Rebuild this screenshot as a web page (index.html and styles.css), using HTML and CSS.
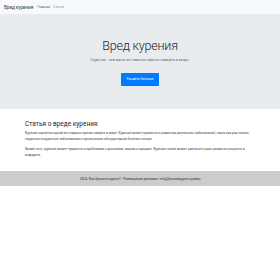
FILE: index.html
```html
<!DOCTYPE html>
<html lang="ru">
<head>
<meta charset="utf-8">
<title>Вред курения</title>
<link rel="stylesheet" href="styles.css">
</head>
<body>
<nav class="navbar">
  <a class="brand" href="#">Вред курения</a>
  <a class="nav-link active" href="#">Главная</a>
  <a class="nav-link" href="#">Статьи</a>
</nav>
<header class="jumbotron">
  <h1 class="title">Вред курения</h1>
  <p class="lead">Курение - это одна из главных причин смерти в мире.</p>
  <a class="btn" href="#">Узнайте больше</a>
</header>
<main class="article">
  <h2 class="article-title">Статья о вреде курения</h2>
  <p class="text">Курение является одной из главных причин смерти в мире. Курение может привести к развитию различных заболеваний, таких как рак легких, сердечно-сосудистые заболевания и хроническая обструктивная болезнь легких.</p>
  <p class="text">Кроме того, курение может привести к проблемам с дыханием, кашлю и одышке. Курение также может увеличить риск развития инсульта и инфаркта.</p>
</main>
<footer class="footer">2024. Как бросить курить? - Размещение рекламы: info@бросайкурить.домен</footer>
</body>
</html>
```

FILE: styles.css
```css
html, body {
  margin: 0;
  padding: 0;
  background: #fff;
  font-family: Roboto, "Liberation Sans", sans-serif;
  color: #212529;
}

.navbar {
  height: 14px;
  background: #f8f9fa;
  display: flex;
  align-items: center;
  padding: 0 4px;
  gap: 3px;
}

.brand {
  font-size: 4.6px;
  color: #343a40;
  text-decoration: none;
  margin-right: 1px;
}

.nav-link {
  font-size: 3.4px;
  color: rgba(0, 0, 0, 0.5);
  text-decoration: none;
}

.nav-link.active {
  color: rgba(0, 0, 0, 0.7);
}

.jumbotron {
  height: 95px;
  box-sizing: border-box;
  background: #e9ecef;
  padding-top: 24px;
  text-align: center;
}

.title {
  margin: 0;
  font-size: 12.5px;
  line-height: 16px;
  font-weight: 300;
  letter-spacing: -0.2px;
}

.lead {
  margin: 3px 0 0;
  font-size: 4px;
  line-height: 6px;
  font-weight: 300;
}

.btn {
  display: inline-block;
  margin-top: 10px;
  width: 38px;
  height: 13px;
  line-height: 13px;
  border-radius: 1px;
  background: #007bff;
  color: #fff;
  font-size: 3.6px;
  text-decoration: none;
}

.article {
  padding: 11px 25px 0;
}

.article-title {
  margin: 0;
  font-size: 6.5px;
  line-height: 8.5px;
  font-weight: 400;
}

.text {
  margin: 1.5px 0 4px;
  max-width: 230px;
  font-size: 3.3px;
  line-height: 6px;
  color: #3a3f44;
}

.footer {
  margin-top: 13px;
  height: 15px;
  background: #cccccc;
  display: flex;
  align-items: center;
  justify-content: center;
  font-size: 3.3px;
  color: #333;
}
```
